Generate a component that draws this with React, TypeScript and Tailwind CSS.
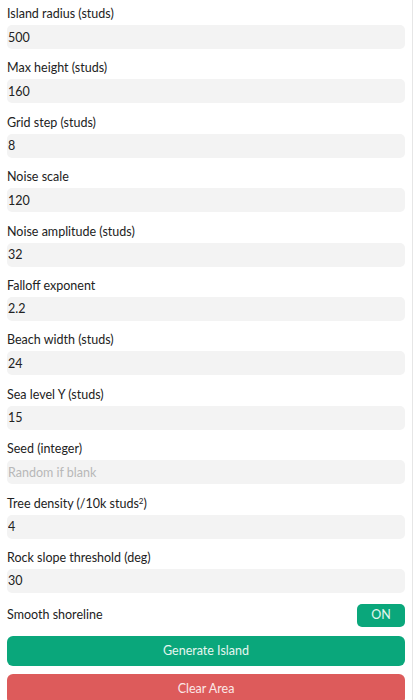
import React from "react";

const fields: { label: React.ReactNode; value: string; placeholder?: string }[] = [
  { label: "Island radius (studs)", value: "500" },
  { label: "Max height (studs)", value: "160" },
  { label: "Grid step (studs)", value: "8" },
  { label: "Noise scale", value: "120" },
  { label: "Noise amplitude (studs)", value: "32" },
  { label: "Falloff exponent", value: "2.2" },
  { label: "Beach width (studs)", value: "24" },
  { label: "Sea level Y (studs)", value: "15" },
  { label: "Seed (integer)", value: "", placeholder: "Random if blank" },
  {
    label: (
      <>
        Tree density (/10k studs<sup className="text-[8px]">2</sup>)
      </>
    ),
    value: "4",
  },
  { label: "Rock slope threshold (deg)", value: "30" },
];

export default function App() {
  return (
    <div
      className="h-[700px] w-[413px] overflow-hidden border-r border-[#e6e6e6] bg-white pl-[7px] pr-[7px] pt-[6px] text-[12.5px] text-[#222]"
      style={{ fontFamily: "Lato, 'Liberation Sans', sans-serif" }}
    >
      {fields.map((f, i) => (
        <div key={i} className="mb-[11.4px]">
          <div className="h-4 leading-4">{f.label}</div>
          <input
            readOnly
            value={f.value}
            placeholder={f.placeholder}
            className="mt-[3px] block h-6 w-full rounded-[5px] bg-[#f3f3f3] px-[1px] text-[12.5px] text-[#222] outline-none placeholder:text-[#b8b8b8]"
          />
        </div>
      ))}
      <div className="mt-[1px] flex items-center justify-between">
        <span>Smooth shoreline</span>
        <button className="h-[23px] w-12 rounded-[5px] bg-[#0aa77b] text-[12.5px] text-[#e6f6f0]">
          ON
        </button>
      </div>
      <button className="mt-[9px] block h-[30px] w-full rounded-[6px] bg-[#0aa77b] text-[12.5px] text-[#e6f6f0]">
        Generate Island
      </button>
      <button className="mt-2 block h-[30px] w-full rounded-[6px] bg-[#dd5b5b] text-[12.5px] text-[#fbe7e7]">
        Clear Area
      </button>
    </div>
  );
}
